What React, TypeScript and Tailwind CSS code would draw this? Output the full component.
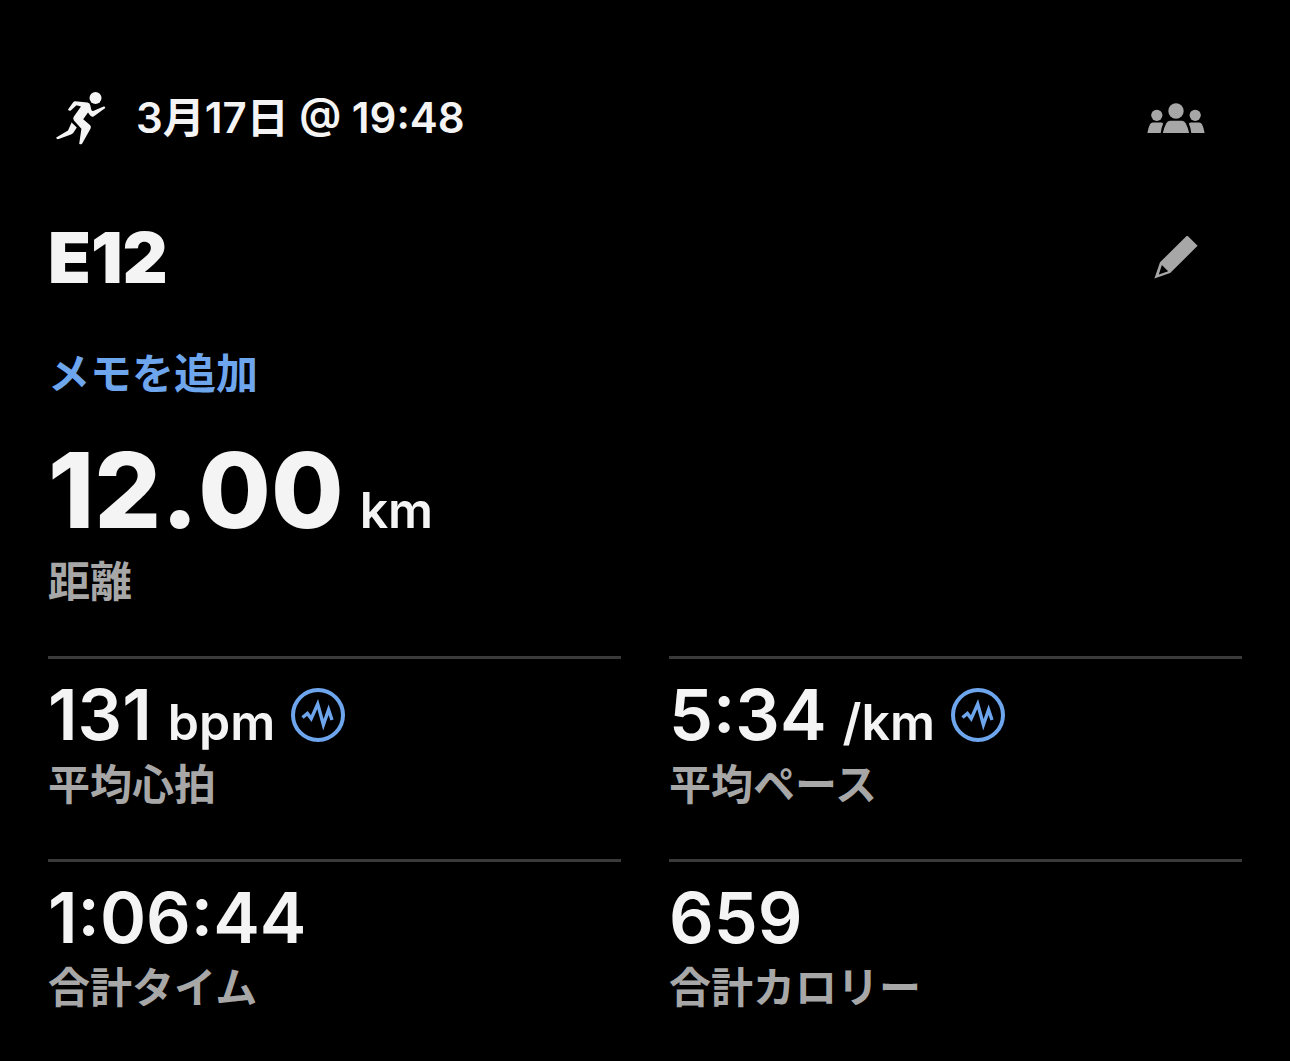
import type { ReactNode } from "react";

type Stat = {
  value: string;
  unit?: string;
  label: string;
  chart?: boolean;
};

const stats: Stat[] = [
  { value: "131", unit: "bpm", label: "平均心拍", chart: true },
  { value: "5:34", unit: "/km", label: "平均ペース", chart: true },
  { value: "1:06:44", label: "合計タイム" },
  { value: "659", label: "合計カロリー" },
];

function RunnerIcon() {
  return (
    <svg viewBox="0 0 52 56" className="h-14 w-[52px] shrink-0 fill-current" aria-hidden="true">
      <circle cx="39.5" cy="8" r="6" />
      <path d="M19 11.2 L31.5 12.6 Q34 13.2 34.4 15.8 L35.2 19.6 Q35.8 21.6 37.8 20.7 L47.6 16.6 Q49.2 16.4 49.3 18 L37.6 26.4 Q35.4 27.2 34 25.2 L32 22.4 L27.2 29.2 L34.2 35.3 Q35.4 36.7 34.6 38.6 L26.2 53.4 Q25 55 23.2 53.8 L25.4 38.8 L17.9 30.4 Q16.5 28.4 17.9 26.6 L25 16.6 L20.5 15.3 L14.8 20.5 Q13 21.4 12 19.6 L17.2 12.2 Q18 11.2 19 11.2 Z" />
      <path d="M15.6 32.4 L20.8 37.4 L17.2 43 Q16.4 43.9 15 44.4 L2 49.2 Q0.2 49.2 0.2 47.6 L12 40.6 Z" />
    </svg>
  );
}

function PeopleIcon() {
  return (
    <svg viewBox="0 0 58 32" className="h-8 w-[58px] fill-current" aria-hidden="true">
      <circle cx="29" cy="9" r="7.7" />
      <circle cx="9.8" cy="13.3" r="5.6" />
      <circle cx="48.2" cy="13.3" r="5.6" />
      <path d="M23 18.8 H35 Q37.5 18.8 38.8 21.5 Q41.3 26.2 42.1 31 H15.9 Q16.7 26.2 19.2 21.5 Q20.5 18.8 23 18.8 Z" />
      <path d="M5.8 20.5 H14.4 Q16.4 20.5 16 22.1 Q14.2 26.2 13.7 31 H0.4 Q1 26.4 3 22.3 Q4 20.5 5.8 20.5 Z" />
      <path d="M52.2 20.5 H43.6 Q41.6 20.5 42 22.1 Q43.8 26.2 44.3 31 H57.6 Q57 26.4 55 22.3 Q54 20.5 52.2 20.5 Z" />
    </svg>
  );
}

function PencilIcon() {
  return (
    <svg viewBox="0 0 44 44" className="size-11 fill-current" aria-hidden="true">
      <path
        fillRule="evenodd"
        d="M33.2 -0.6 L43.6 9.8 L16.2 37 L0.4 42.4 L6 26.3 Z M7.9 29 L4.8 38.4 L14.2 35.2 Z"
      />
    </svg>
  );
}

function ChartIcon() {
  return (
    <svg viewBox="0 0 54 54" className="size-[54px] fill-none stroke-current" aria-hidden="true">
      <circle cx="27" cy="27" r="25" strokeWidth="4" />
      <path
        d="M11.5 29.5 L16.4 25.4 L20.2 30.6 L26.7 16 L32.4 36.8 L37.6 21.8 L41 32"
        strokeWidth="3.4"
        strokeMiterlimit="10"
      />
    </svg>
  );
}

function IconButton({ label, children }: { label: string; children: ReactNode }) {
  return (
    <button
      type="button"
      aria-label={label}
      className="flex h-15 w-33 shrink-0 items-center justify-center text-[#a7a7a7]"
    >
      {children}
    </button>
  );
}

function StatCell({ value, unit, label, chart }: Stat) {
  return (
    <div className="flex flex-col-reverse gap-1 border-t-3 border-[#3a3a3a] pt-4 pb-12">
      <dt className="text-[42px] leading-13 font-bold text-[#a7a7a7]">{label}</dt>
      <dd className="flex h-20 items-center gap-4">
        <span className="flex items-baseline gap-4">
          <span className="text-[70px] leading-20 font-semibold [font-kerning:none]">{value}</span>
          {unit && (
            <span className="text-[50px] leading-none font-semibold [font-kerning:none]">{unit}</span>
          )}
        </span>
        {chart && (
          <button type="button" aria-label={`${label}のグラフ`} className="text-[#6ea6ee]">
            <ChartIcon />
          </button>
        )}
      </dd>
    </div>
  );
}

export default function App() {
  return (
    <main
      lang="ja"
      className="min-h-screen bg-black px-12 pt-22 font-['Inter','Noto_Sans_CJK_JP',sans-serif] text-[#f4f4f4]"
    >
      <header className="flex items-center justify-between">
        <div className="flex items-center gap-7 pl-2">
          <RunnerIcon />
          <time className="text-[42px] leading-15 font-semibold">3月17日 @ 19:48</time>
        </div>
        <IconButton label="共有範囲">
          <PeopleIcon />
        </IconButton>
      </header>

      <div className="mt-[70px] flex h-20 items-center justify-between">
        <h1 className="text-[70px] leading-20 font-black [font-kerning:none]">E12</h1>
        <IconButton label="編集">
          <PencilIcon />
        </IconButton>
      </div>

      <a href="#memo" className="mt-[50px] block w-fit text-[42px] leading-13 font-bold text-[#6ea6ee]">
        メモを追加
      </a>

      <section className="mt-[34px]">
        <p className="flex items-baseline gap-4">
          <span className="text-[105px] leading-28 font-extrabold [font-kerning:none]">12.00</span>
          <span className="text-[50px] leading-none font-semibold">km</span>
        </p>
        <p className="mt-[10px] text-[42px] leading-13 font-bold text-[#a7a7a7]">距離</p>
      </section>

      <dl className="mt-12 grid grid-cols-2 gap-x-12">
        {stats.map((stat) => (
          <StatCell key={stat.label} {...stat} />
        ))}
      </dl>
    </main>
  );
}
